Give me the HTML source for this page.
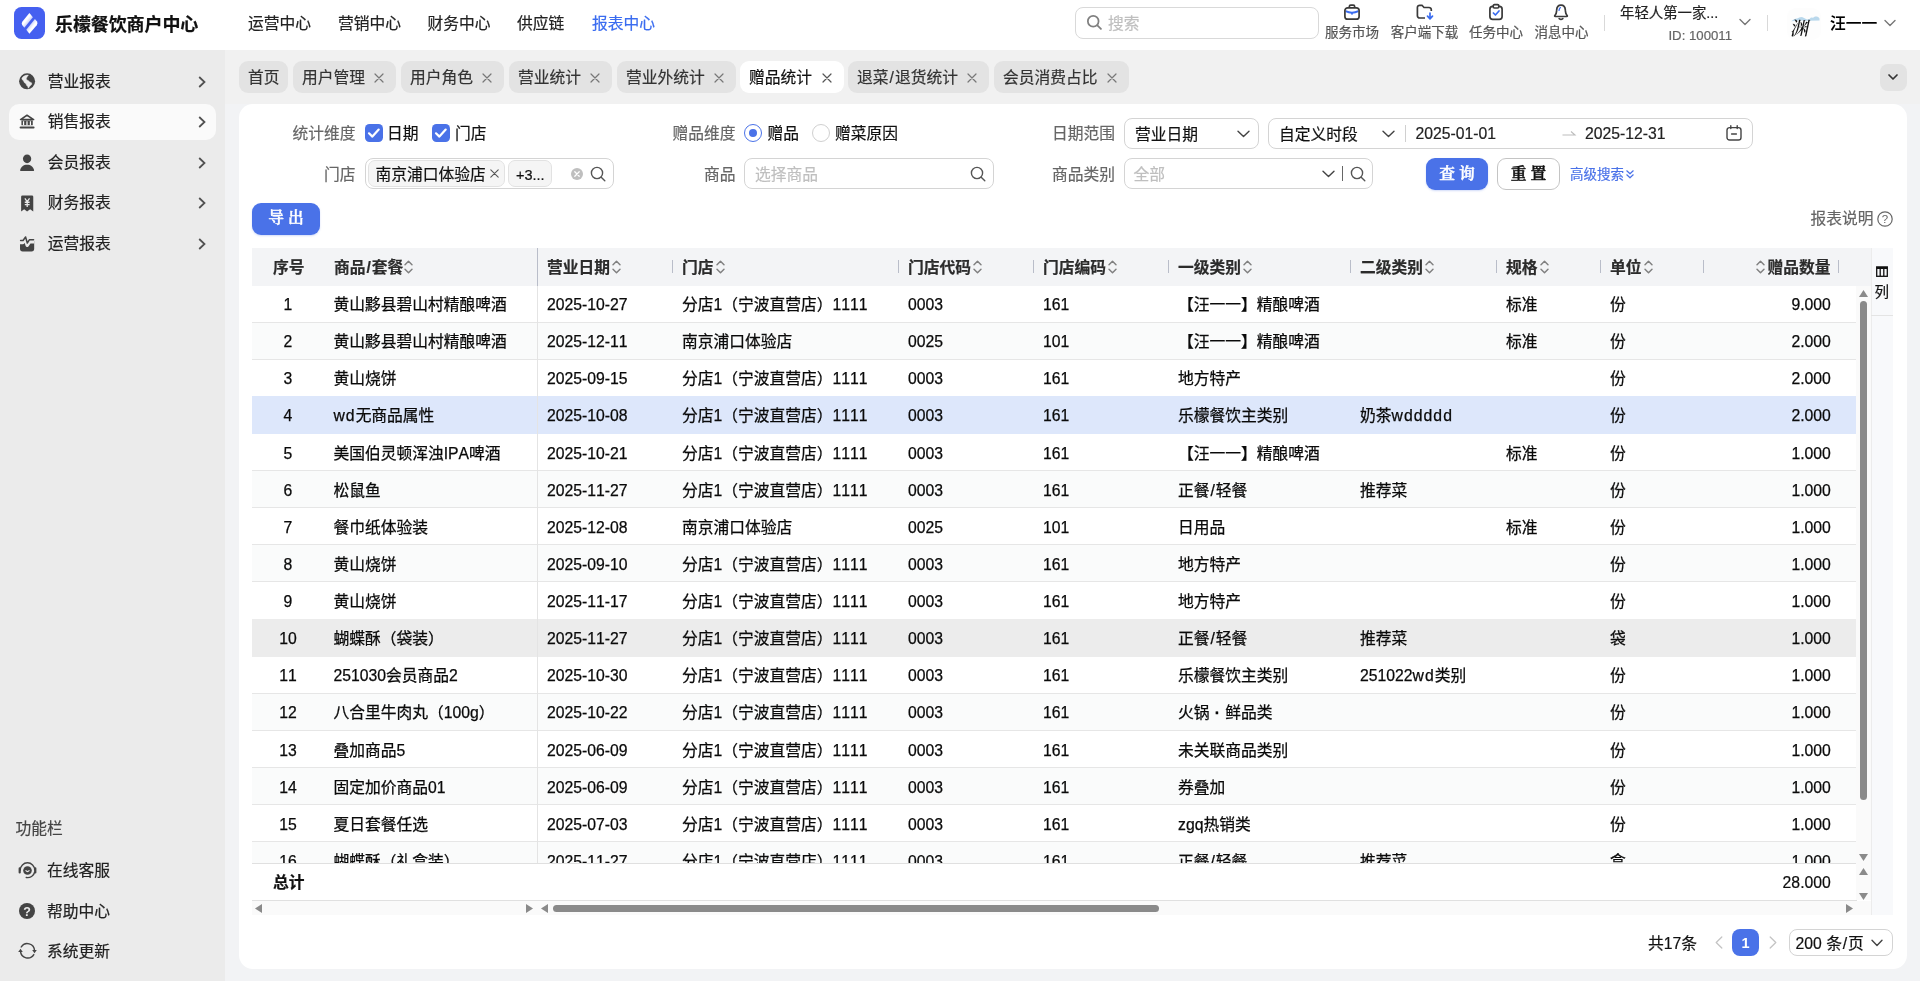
<!DOCTYPE html>
<html lang="zh-CN"><head><meta charset="utf-8"><title>乐檬餐饮商户中心</title>
<style>
*{box-sizing:border-box;margin:0;padding:0}
html,body{width:1920px;height:981px;overflow:hidden}
body{font-family:"Liberation Sans","Noto Sans CJK SC",sans-serif;font-size:15.75px;color:#1f1f1f;background:#f2f3f5;position:relative}
.a{position:absolute}
.t{position:absolute;white-space:nowrap;line-height:24px;height:24px;margin-top:1px;-webkit-text-stroke:0.2px}
#wrap{position:absolute;left:0;top:0;width:1920px;height:981px;will-change:transform}
svg{display:block;overflow:visible}
#top{left:0;top:0;width:1920px;height:50px;background:#fff}
#side{left:0;top:50px;width:225px;height:931px;background:#ebebeb}
.nav{font-size:15.75px;top:11px;color:#222}
.mi{left:9px;width:207px;height:36px;border-radius:10px}
.mi .t{left:38.8px;top:5px;color:#222}
.mi svg.ic{position:absolute;left:10.2px;top:9.8px}
.mi svg.ch{position:absolute;left:189px;top:12px}
.tab{top:61px;height:31.5px;border-radius:9px;background:#e3e3e3;color:#333}
.tab .t{left:9px;top:4px}
.tab svg{position:absolute;right:12px;top:11.5px}
#card{left:239px;top:104px;width:1668px;height:864.5px;background:#fff;border-radius:14px}
.lab{color:#666;text-align:right}
.inp{border:1px solid #d4d4d4;border-radius:8px;background:#fff}
.ph{color:#bfbfbf}
.btn{border-radius:9px;font-family:"Liberation Serif","Noto Serif CJK SC",serif;font-weight:600;-webkit-text-stroke:0.4px currentColor;text-align:center;font-size:15.75px}
.hd{font-weight:700;color:#2b2b2b;top:255px}
.sep{width:1px;height:13px;top:260px;background:#b9bdc9}
.row{left:252px;width:1604px;height:37.1px;border-bottom:1px solid #e6e6e6;overflow:hidden}
.row .t{top:6px;color:#0a0a0a;-webkit-text-stroke:0.25px;font-kerning:none}
.ls{letter-spacing:1.05px}.sl{padding:0 .9px;font-style:normal}
.c0{left:0;width:72px;text-align:center}
.c1{left:81.4px}.c2{left:294.9px}.c3{left:429.9px}.c4{left:655.9px}.c5{left:791px}.c6{left:926px}.c7{left:1108px}.c8{left:1254px}.c9{left:1358px}
.c10{right:25.2px;text-align:right}
</style></head><body><div id="wrap">
<div id="top" class="a">
<div class="a" style="left:14px;top:6.7px;width:31px;height:32.4px;border-radius:7.5px;background:#4560f0"><svg width="31" height="32.4" viewBox="0 0 31 32.4"><defs><linearGradient id="lg1" x1="0.2" y1="0.2" x2="0.75" y2="0.75"><stop offset="0.45" stop-color="#fff"/><stop offset="1" stop-color="#fff" stop-opacity="0.55"/></linearGradient><linearGradient id="lg2" x1="0.8" y1="0.8" x2="0.25" y2="0.25"><stop offset="0.45" stop-color="#fff"/><stop offset="1" stop-color="#fff" stop-opacity="0.55"/></linearGradient></defs><path d="M15.4 6.1 L8.5 14.4 Q7 16.3 8.2 18.1 L10.3 20.7 L18.9 10.2 Z" fill="url(#lg1)"/><path d="M15.4 26.7 L22.7 18.3 Q24.2 16.4 23 14.6 L20.9 12 L12.3 22.7 Z" fill="url(#lg2)"/></svg></div>
<div class="t" style="left:55px;top:11.6px;font-size:18px;font-weight:700;color:#111;letter-spacing:-0.1px">乐檬餐饮商户中心</div>
<div class="t nav" style="left:248px;color:#222">运营中心</div>
<div class="t nav" style="left:338px;color:#222">营销中心</div>
<div class="t nav" style="left:427.5px;color:#222">财务中心</div>
<div class="t nav" style="left:517px;color:#222">供应链</div>
<div class="t nav" style="left:592px;color:#3a6cf0">报表中心</div>
<div class="a inp" style="left:1075px;top:7px;width:244px;height:32px;border-color:#d9d9d9"><svg class="a" style="left:9.5px;top:6.3px" width="16.5" height="16.5" viewBox="0 0 16 16" fill="none" stroke="#808080" stroke-width="1.7"><circle cx="7" cy="7" r="5.2"/><path d="M11 11 L14.5 14.5" stroke-linecap="round"/></svg><div class="t ph" style="left:32px;top:3px">搜索</div></div>
<div class="t" style="left:1307px;top:20px;width:90px;text-align:center;font-size:13.5px;color:#555">服务市场</div>
<div class="t" style="left:1379.5px;top:20px;width:90px;text-align:center;font-size:13.5px;color:#555">客户端下载</div>
<div class="t" style="left:1451px;top:20px;width:90px;text-align:center;font-size:13.5px;color:#555">任务中心</div>
<div class="t" style="left:1516.5px;top:20px;width:90px;text-align:center;font-size:13.5px;color:#555">消息中心</div>
<svg class="a" style="left:1343px;top:3px" width="18" height="18" viewBox="0 0 18 18" fill="none" stroke="#3a3a3a" stroke-width="1.7"><path d="M2.6 8.2 Q9 11.2 15.4 8.2 M9 10 V11.4" stroke="#3a6cf0" stroke-width="2"/><rect x="1.9" y="4.8" width="14.2" height="11.4" rx="2.8"/><path d="M6.3 4.8 V3.7 a1.5 1.5 0 0 1 1.5 -1.5 h2.4 a1.5 1.5 0 0 1 1.5 1.5 V4.8"/></svg>
<svg class="a" style="left:1415px;top:3px" width="20" height="18" viewBox="0 0 20 18" fill="none" stroke="#3a3a3a" stroke-width="1.7"><path d="M10 15 H4.7 a2.3 2.3 0 0 1 -2.3 -2.3 V4.6 a2.3 2.3 0 0 1 2.3 -2.3 H7 l2 2.2 h5 a2.3 2.3 0 0 1 2.3 2.3 V8"/><path d="M15 10 v5.5 M12.5 13.2 L15 15.8 L17.5 13.2" stroke="#3a6cf0" stroke-linecap="round" stroke-linejoin="round"/></svg>
<svg class="a" style="left:1487px;top:3px" width="18" height="18" viewBox="0 0 18 18" fill="none" stroke="#3a3a3a" stroke-width="1.7"><rect x="2.9" y="3.4" width="12.2" height="13" rx="2.8"/><rect x="6.2" y="1.7" width="5.6" height="3.3" rx="1.2" fill="#fff"/><path d="M6.4 10 L8.4 12 L12 8" stroke="#3a6cf0" stroke-linecap="round" stroke-linejoin="round"/></svg>
<svg class="a" style="left:1552px;top:3px" width="18" height="18" viewBox="0 0 18 18" fill="none" stroke="#3a3a3a" stroke-width="1.7"><path d="M3 12.4 C4.6 11.2 4.4 9.4 4.6 7.4 C4.8 4.2 6.7 2.2 9 2.2 C11.3 2.2 13.2 4.2 13.4 7.4 C13.6 9.4 13.4 11.2 15 12.4 Q15.8 13.4 14.6 13.5 H3.4 Q2.2 13.4 3 12.4 Z" stroke-linejoin="round"/><path d="M7.2 15.6 Q9 17 10.8 15.6" stroke-linecap="round"/><path d="M8.4 4.6 Q7.2 5.6 7 7.4" stroke="#3a6cf0" stroke-width="1.3" stroke-linecap="round"/></svg>
<div class="a" style="left:1604px;top:15px;width:1px;height:16px;background:#d9d9d9"></div>
<div class="t" style="left:1620px;top:0px;font-size:14.4px;color:#222">年轻人第一家...</div>
<div class="t" style="left:1632px;width:100px;text-align:right;top:23px;font-size:13.2px;color:#666">ID: 100011</div>
<svg class="a" style="left:1739px;top:18px" width="12" height="8" viewBox="0 0 12 8" fill="none" stroke="#777" stroke-width="1.4" stroke-linecap="round" stroke-linejoin="round"><path d="M1 1.5 L6 6.5 L11 1.5"/></svg>
<div class="a" style="left:1767px;top:15px;width:1px;height:16px;background:#d9d9d9"></div>
<div class="a" style="left:1787px;top:8px;width:34px;height:32px;border-radius:9px;background:#fdfdfd;overflow:hidden"><svg class="a" style="left:4px;top:7.8px" width="29" height="6" viewBox="0 0 29 6"><path d="M0 5.2 L3.5 3 L6 2.6 L9 1.2 L11 1 L13 2 L16 3.4 L18.5 3 L20 1.6 L22 1.8 L24 0.4 L26 0.4 L27.5 1.2 L28.5 2.5 L28.5 4.6 L18 4.8 L9 4.6 Z" fill="#b9d8ec"/></svg><div class="t" style="left:3.5px;top:8px;font-family:'Liberation Serif','Noto Serif CJK SC',serif;font-weight:500;-webkit-text-stroke:0;font-size:18.5px;color:#111;transform:skewX(-12deg)">渊</div></div>
<div class="t" style="left:1830px;top:10.5px;font-weight:500;-webkit-text-stroke:0.1px;color:#000">汪一一</div>
<svg class="a" style="left:1884px;top:19px" width="12" height="8" viewBox="0 0 12 8" fill="none" stroke="#777" stroke-width="1.4" stroke-linecap="round" stroke-linejoin="round"><path d="M1 1.5 L6 6.5 L11 1.5"/></svg>
</div>
<div id="side" class="a">
<div class="a mi" style="top:13.5px;"><svg class="ic" style="left:10px;top:9.6px" width="16.2" height="16.6" viewBox="0 0 16 16"><circle cx="8" cy="8" r="7.9" fill="#444"/><path d="M2.8 5.2 C3.6 3.4 6 1.8 9.2 1.9 L8 3.6 L7.2 5.2 L7.6 6.6 L9 7.2 L10.6 8.6 L12.6 9.6 L12.4 11.2 L10.6 13 L9.2 14.8 L8.6 13 L7.4 12 L7 10.4 L5.4 9.4 L4.6 7.6 L3.4 6.6 Z" fill="#ebebeb" stroke="#ebebeb" stroke-width="0.5" stroke-linejoin="round"/></svg><div class="t">营业报表</div><svg class="ch" width="8" height="12" viewBox="0 0 8 12" fill="none" stroke="#505050" stroke-width="1.75" stroke-linejoin="miter"><path d="M1.2 1 L6.5 6 L1.2 11"/></svg></div>
<div class="a mi" style="top:54.0px;background:#fafafa;"><svg class="ic" width="16.2" height="16.8" preserveAspectRatio="none" viewBox="0 0 16 16"><path d="M1.5 5.3 L7.9 1.2 L14.5 5.3 Z" fill="none" stroke="#444" stroke-width="1.5" stroke-linejoin="round"/><path d="M2.4 6.1 H13.6 V10.7 H2.4 Z" fill="#444"/><path d="M4.5 6.9 V10.7 M7.9 6.9 V10.7 M11.3 6.9 V10.7" stroke="#fafafa" stroke-width="1.2"/><path d="M1.6 12.8 H14.4" stroke="#444" stroke-width="2" stroke-linecap="round"/></svg><div class="t">销售报表</div><svg class="ch" width="8" height="12" viewBox="0 0 8 12" fill="none" stroke="#505050" stroke-width="1.75" stroke-linejoin="miter"><path d="M1.2 1 L6.5 6 L1.2 11"/></svg></div>
<div class="a mi" style="top:94.5px;"><svg class="ic" width="16.2" height="16.8" preserveAspectRatio="none" viewBox="0 0 16 16" fill="#444"><circle cx="8" cy="4.6" r="4.1"/><path d="M1.6 16.2 Q1 16.2 1.1 15.5 C1.8 12.2 4.4 10.3 8 10.3 C11.6 10.3 14.2 12.2 14.9 15.5 Q15 16.2 14.4 16.2 Z"/></svg><div class="t">会员报表</div><svg class="ch" width="8" height="12" viewBox="0 0 8 12" fill="none" stroke="#505050" stroke-width="1.75" stroke-linejoin="miter"><path d="M1.2 1 L6.5 6 L1.2 11"/></svg></div>
<div class="a mi" style="top:135.0px;"><svg class="ic" width="16.2" height="16.8" preserveAspectRatio="none" viewBox="0 0 16 16"><path d="M3.4 0.4 H12.8 Q14.1 0.4 14.1 1.7 V15.8 L11 13.5 L8 15.8 L5.1 13.5 L2.1 15.8 V1.7 Q2.1 0.4 3.4 0.4 Z" fill="#444"/><path d="M5.8 3.3 L8.1 6.4 L10.4 3.3 M5.7 6.9 H10.5 M5.7 9.1 H10.5 M8.1 6.4 V11.4" stroke="#ebebeb" stroke-width="1.25" fill="none"/></svg><div class="t">财务报表</div><svg class="ch" width="8" height="12" viewBox="0 0 8 12" fill="none" stroke="#505050" stroke-width="1.75" stroke-linejoin="miter"><path d="M1.2 1 L6.5 6 L1.2 11"/></svg></div>
<div class="a mi" style="top:175.5px;"><svg class="ic" width="16.2" height="16.8" preserveAspectRatio="none" viewBox="0 0 16 16"><path d="M1 5.6 H15 V13 Q15 15.6 12.4 15.6 H3.6 Q1 15.6 1 13 Z" fill="#444"/><path d="M1 6.9 H3.8 L6.3 3.6 L8.2 9.6 L10.3 6.4 H15" stroke="#ebebeb" stroke-width="3.6" fill="none" stroke-linejoin="round"/><path d="M1.6 5.2 H4 L6.5 1.9 L8.2 7.6 L10.2 4.6 H14.4" stroke="#444" stroke-width="1.5" fill="none" stroke-linejoin="round" stroke-linecap="round"/></svg><div class="t">运营报表</div><svg class="ch" width="8" height="12" viewBox="0 0 8 12" fill="none" stroke="#505050" stroke-width="1.75" stroke-linejoin="miter"><path d="M1.2 1 L6.5 6 L1.2 11"/></svg></div>
<div class="t" style="left:15.6px;top:766px;color:#444">功能栏</div>
<div class="a" style="left:0;top:811.0px;width:225px;height:18px"><svg class="a" style="left:17.6px;top:-0.2px" width="19" height="19" viewBox="0 0 19 19" fill="none" stroke="#444" stroke-width="1.4" stroke-linecap="round"><path d="M2.3 9 A7.2 7.2 0 0 1 16.7 9"/><path d="M16.7 11 A7.2 7.2 0 0 1 8.2 16.5"/><path d="M1.7 7.4 V11.4 M17.3 7.4 V11.4" stroke-width="2.2"/><circle cx="9.5" cy="9.5" r="4.3" fill="#444" stroke="none"/><path d="M7.9 9.7 Q9.5 11.6 11.1 9.7" stroke="#ebebeb" stroke-width="1.1"/></svg><div class="t" style="left:47px;top:-3px;color:#222">在线客服</div></div>
<div class="a" style="left:0;top:851.5px;width:225px;height:18px"><svg class="a" style="left:18px;top:0.5px" width="18" height="18" viewBox="0 0 18 18"><circle cx="9" cy="9" r="8" fill="#444"/><text x="9" y="13.6" font-size="12.5" font-weight="700" text-anchor="middle" fill="#ebebeb" font-family='"Liberation Sans",sans-serif'>?</text></svg><div class="t" style="left:47px;top:-3px;color:#222">帮助中心</div></div>
<div class="a" style="left:0;top:892.0px;width:225px;height:18px"><svg class="a" style="left:17.8px;top:0.3px" width="19" height="19" viewBox="0 0 19 19" fill="none" stroke="#444" stroke-width="1.4" stroke-linecap="round"><path d="M3.2 5 A7.2 7.2 0 0 1 16.5 8.6"/><path d="M15.8 12.6 A7.2 7.2 0 0 1 2.5 9.4"/><path d="M14.2 8 H18.8 L16.5 11.2 Z" fill="#444" stroke="none"/><path d="M0.2 10 H4.8 L2.5 6.8 Z" fill="#444" stroke="none"/></svg><div class="t" style="left:47px;top:-3px;color:#222">系统更新</div></div>
</div>
<div class="a" style="left:225px;top:50px;width:1695px;height:54px;background:#f1f1f1"></div>
<div class="a tab" style="left:239px;width:49px;"><div class="t">首页</div></div>
<div class="a tab" style="left:293px;width:102.75px;"><div class="t">用户管理</div><svg width="10" height="10" viewBox="0 0 10 10" stroke="#777" stroke-width="1.2" stroke-linecap="round"><path d="M1 1 L9 9 M9 1 L1 9"/></svg></div>
<div class="a tab" style="left:401px;width:102.75px;"><div class="t">用户角色</div><svg width="10" height="10" viewBox="0 0 10 10" stroke="#777" stroke-width="1.2" stroke-linecap="round"><path d="M1 1 L9 9 M9 1 L1 9"/></svg></div>
<div class="a tab" style="left:509px;width:102.75px;"><div class="t">营业统计</div><svg width="10" height="10" viewBox="0 0 10 10" stroke="#777" stroke-width="1.2" stroke-linecap="round"><path d="M1 1 L9 9 M9 1 L1 9"/></svg></div>
<div class="a tab" style="left:617px;width:118.75px;"><div class="t">营业外统计</div><svg width="10" height="10" viewBox="0 0 10 10" stroke="#777" stroke-width="1.2" stroke-linecap="round"><path d="M1 1 L9 9 M9 1 L1 9"/></svg></div>
<div class="a tab" style="left:740px;width:104px;background:#fff;color:#111;"><div class="t">赠品统计</div><svg width="10" height="10" viewBox="0 0 10 10" stroke="#555" stroke-width="1.2" stroke-linecap="round"><path d="M1 1 L9 9 M9 1 L1 9"/></svg></div>
<div class="a tab" style="left:848px;width:141px;"><div class="t">退菜<span style="padding:0 1px">/</span>退货统计</div><svg width="10" height="10" viewBox="0 0 10 10" stroke="#777" stroke-width="1.2" stroke-linecap="round"><path d="M1 1 L9 9 M9 1 L1 9"/></svg></div>
<div class="a tab" style="left:994px;width:135px;"><div class="t">会员消费占比</div><svg width="10" height="10" viewBox="0 0 10 10" stroke="#777" stroke-width="1.2" stroke-linecap="round"><path d="M1 1 L9 9 M9 1 L1 9"/></svg></div>
<div class="a" style="left:1880px;top:63.8px;width:27px;height:27.2px;border-radius:8px;background:#e3e3e3"><svg class="a" style="left:8.3px;top:10.2px" width="10" height="7" viewBox="0 0 10 7" fill="none" stroke="#333" stroke-width="1.7" stroke-linecap="round" stroke-linejoin="round"><path d="M1 1 L5 5 L9 1"/></svg></div>
<div id="card" class="a"></div>
<div class="t lab" style="left:235.5px;width:120px;top:121px">统计维度</div>
<div class="t lab" style="left:235.5px;width:120px;top:162px">门店</div>
<div class="t lab" style="left:615.5px;width:120px;top:121px">赠品维度</div>
<div class="t lab" style="left:615.5px;width:120px;top:162px">商品</div>
<div class="t lab" style="left:995px;width:120px;top:121px">日期范围</div>
<div class="t lab" style="left:995px;width:120px;top:162px">商品类别</div>
<div class="a" style="left:365px;top:124px;width:18px;height:18px;border-radius:4.5px;background:#4a72e8"><svg width="18" height="18" viewBox="0 0 18 18" fill="none" stroke="#fff" stroke-width="2.2" stroke-linecap="round" stroke-linejoin="round"><path d="M4 9.3 L7.4 12.6 L13.7 5.6"/></svg></div>
<div class="t" style="left:387px;top:121px;color:#111">日期</div>
<div class="a" style="left:432px;top:124px;width:18px;height:18px;border-radius:4.5px;background:#4a72e8"><svg width="18" height="18" viewBox="0 0 18 18" fill="none" stroke="#fff" stroke-width="2.2" stroke-linecap="round" stroke-linejoin="round"><path d="M4 9.3 L7.4 12.6 L13.7 5.6"/></svg></div>
<div class="t" style="left:455px;top:121px;color:#111">门店</div>
<div class="a" style="left:744px;top:124px;width:18px;height:18px;border-radius:9px;border:1.2px solid #4a72e8;background:#fff"><div class="a" style="left:3.8px;top:3.8px;width:8px;height:8px;border-radius:4px;background:#4a72e8"></div></div>
<div class="t" style="left:767.5px;top:121px;color:#111">赠品</div>
<div class="a" style="left:812px;top:124px;width:18px;height:18px;border-radius:9px;border:1px solid #d0d0d0;background:#fff"></div>
<div class="t" style="left:835px;top:121px;color:#111">赠菜原因</div>
<div class="a inp" style="left:1124px;top:118px;width:135px;height:31px"></div>
<div class="t" style="left:1135px;top:122px;color:#111">营业日期</div>
<svg class="a" style="left:1236.5px;top:130px" width="13" height="8" viewBox="0 0 13 8" fill="none" stroke="#444" stroke-width="1.4" stroke-linecap="round" stroke-linejoin="round"><path d="M1 1.2 L6.5 6.6 L12 1.2"/></svg>
<div class="a inp" style="left:1268px;top:118px;width:485px;height:31px"></div>
<div class="t" style="left:1279px;top:122px;color:#111">自定义时段</div>
<svg class="a" style="left:1381.5px;top:130px" width="13" height="8" viewBox="0 0 13 8" fill="none" stroke="#444" stroke-width="1.4" stroke-linecap="round" stroke-linejoin="round"><path d="M1 1.2 L6.5 6.6 L12 1.2"/></svg>
<div class="a" style="left:1404.5px;top:125px;width:1px;height:17px;background:#d0d0d0"></div>
<div class="t" style="left:1415.5px;top:121px;color:#222">2025-01-01</div>
<svg class="a" style="left:1562px;top:129px" width="14" height="8" viewBox="0 0 14 8" fill="none" stroke="#bdbdbd" stroke-width="1.1"><path d="M0.5 6 H13 L9 2.5"/></svg>
<div class="t" style="left:1585px;top:121px;color:#222">2025-12-31</div>
<svg class="a" style="left:1726px;top:125px" width="16" height="16" viewBox="0 0 16 16" fill="none" stroke="#444" stroke-width="1.4" stroke-linecap="round"><rect x="1" y="2.6" width="14" height="12.4" rx="2.6"/><path d="M4.8 0.8 V3.6 M11.2 0.8 V3.6 M5.6 9 H10.4"/></svg>
<div class="a inp" style="left:365px;top:158px;width:248.5px;height:31px"></div>
<div class="a" style="left:368px;top:160px;width:137px;height:27px;border-radius:7px;background:#f5f5f5;border:1px solid #e2e2e2"></div>
<div class="t" style="left:375.5px;top:161.5px;color:#111">南京浦口体验店</div>
<svg class="a" style="left:490px;top:169px" width="9" height="9" viewBox="0 0 9 9" stroke="#555" stroke-width="1.1" stroke-linecap="round"><path d="M0.8 0.8 L8.2 8.2 M8.2 0.8 L0.8 8.2"/></svg>
<div class="a" style="left:507.5px;top:160px;width:44px;height:27px;border-radius:7px;background:#f5f5f5;border:1px solid #e2e2e2"></div>
<div class="t" style="left:516px;top:162px;color:#111;font-size:14.5px">+3...</div>
<svg class="a" style="left:570.5px;top:168px" width="12" height="12" viewBox="0 0 12 12"><circle cx="6" cy="6" r="6" fill="#bfbfbf"/><path d="M3.8 3.8 L8.2 8.2 M8.2 3.8 L3.8 8.2" stroke="#fff" stroke-width="1.3" stroke-linecap="round"/></svg>
<svg class="a" style="left:590px;top:166px" width="16" height="16" viewBox="0 0 16 16" fill="none" stroke="#555" stroke-width="1.4"><circle cx="7" cy="7" r="5.6"/><path d="M11.2 11.2 L14.8 14.8" stroke-linecap="round"/></svg>
<div class="a inp" style="left:744px;top:158px;width:249.5px;height:31px"></div>
<div class="t ph" style="left:755px;top:162px">选择商品</div>
<svg class="a" style="left:970px;top:166px" width="16" height="16" viewBox="0 0 16 16" fill="none" stroke="#555" stroke-width="1.4"><circle cx="7" cy="7" r="5.6"/><path d="M11.2 11.2 L14.8 14.8" stroke-linecap="round"/></svg>
<div class="a inp" style="left:1124px;top:158px;width:249px;height:31px"></div>
<div class="t ph" style="left:1133.5px;top:162px">全部</div>
<svg class="a" style="left:1321.5px;top:170px" width="13" height="8" viewBox="0 0 13 8" fill="none" stroke="#444" stroke-width="1.4" stroke-linecap="round" stroke-linejoin="round"><path d="M1 1.2 L6.5 6.6 L12 1.2"/></svg>
<div class="a" style="left:1342px;top:166px;width:1px;height:15px;background:#666"></div>
<svg class="a" style="left:1350px;top:166px" width="16" height="16" viewBox="0 0 16 16" fill="none" stroke="#555" stroke-width="1.4"><circle cx="7" cy="7" r="5.6"/><path d="M11.2 11.2 L14.8 14.8" stroke-linecap="round"/></svg>
<div class="a btn" style="left:1426px;top:158px;width:62px;height:32px;background:#4a72e8;color:#fff;line-height:31px;box-shadow:0 1px 2px rgba(74,114,232,.25)">查 询</div>
<div class="a btn" style="left:1497px;top:158px;width:63px;height:32px;background:#fff;color:#111;border:1px solid #c4c4c4;line-height:29px">重 置</div>
<div class="t" style="left:1570px;top:161.5px;font-size:13.5px;color:#4a72e8">高级搜索</div>
<svg class="a" style="left:1625.5px;top:170px" width="8" height="9" viewBox="0 0 8 9" fill="none" stroke="#4a72e8" stroke-width="1.2" stroke-linecap="round" stroke-linejoin="round"><path d="M0.8 0.8 L4 3.8 L7.2 0.8 M0.8 4.8 L4 7.8 L7.2 4.8"/></svg>
<div class="a btn" style="left:252px;top:203px;width:68px;height:31.5px;background:#4a72e8;color:#fff;line-height:30.5px;box-shadow:0 1px 2px rgba(74,114,232,.25)">导 出</div>
<div class="t" style="left:1810.5px;top:205.5px;color:#666">报表说明</div>
<svg class="a" style="left:1877px;top:211px" width="16" height="16" viewBox="0 0 16 16" fill="none" stroke="#666" stroke-width="1.2"><circle cx="8" cy="8" r="7.2"/><text x="8" y="12" font-size="11.5" text-anchor="middle" fill="#666" stroke="none" font-family='"Liberation Sans",sans-serif'>?</text></svg>
<div class="a" style="left:252px;top:248px;width:1619px;height:38px;background:#f3f4f6"></div>
<div class="a" style="left:1871px;top:248px;width:22px;height:667px;background:#f8f9fb;border-left:1px solid #ececec"></div>
<div class="a" style="left:1871px;top:315px;width:22px;height:1px;background:#e4e4e4"></div>
<svg class="a" style="left:1876px;top:266px" width="12" height="11" viewBox="0 0 12 11" fill="none" stroke="#111" stroke-width="1.3"><rect x="0.7" y="0.9" width="10.6" height="9.4"/><path d="M0.7 2 H11.3" stroke-width="2"/><path d="M4.2 1 V10 M7.8 1 V10"/></svg>
<div class="t" style="left:1874.5px;top:279px;font-size:14.5px;color:#111">列</div>
<div class="t hd" style="left:273px">序号</div>
<div class="t hd" style="left:334px">商品<i class="sl">/</i>套餐</div>
<svg class="a" style="left:404px;top:260px" width="9" height="14" viewBox="0 0 9 14" fill="none" stroke="#808080" stroke-width="1.45" stroke-linecap="round" stroke-linejoin="round"><path d="M1 4.8 L4.5 1.2 L8 4.8 M1 9.2 L4.5 12.8 L8 9.2"/></svg>
<div class="t hd" style="left:547px">营业日期</div>
<svg class="a" style="left:612px;top:260px" width="9" height="14" viewBox="0 0 9 14" fill="none" stroke="#808080" stroke-width="1.45" stroke-linecap="round" stroke-linejoin="round"><path d="M1 4.8 L4.5 1.2 L8 4.8 M1 9.2 L4.5 12.8 L8 9.2"/></svg>
<div class="t hd" style="left:682px">门店</div>
<svg class="a" style="left:715.5px;top:260px" width="9" height="14" viewBox="0 0 9 14" fill="none" stroke="#808080" stroke-width="1.45" stroke-linecap="round" stroke-linejoin="round"><path d="M1 4.8 L4.5 1.2 L8 4.8 M1 9.2 L4.5 12.8 L8 9.2"/></svg>
<div class="t hd" style="left:908px">门店代码</div>
<svg class="a" style="left:973px;top:260px" width="9" height="14" viewBox="0 0 9 14" fill="none" stroke="#808080" stroke-width="1.45" stroke-linecap="round" stroke-linejoin="round"><path d="M1 4.8 L4.5 1.2 L8 4.8 M1 9.2 L4.5 12.8 L8 9.2"/></svg>
<div class="t hd" style="left:1043px">门店编码</div>
<svg class="a" style="left:1108px;top:260px" width="9" height="14" viewBox="0 0 9 14" fill="none" stroke="#808080" stroke-width="1.45" stroke-linecap="round" stroke-linejoin="round"><path d="M1 4.8 L4.5 1.2 L8 4.8 M1 9.2 L4.5 12.8 L8 9.2"/></svg>
<div class="t hd" style="left:1178px">一级类别</div>
<svg class="a" style="left:1243px;top:260px" width="9" height="14" viewBox="0 0 9 14" fill="none" stroke="#808080" stroke-width="1.45" stroke-linecap="round" stroke-linejoin="round"><path d="M1 4.8 L4.5 1.2 L8 4.8 M1 9.2 L4.5 12.8 L8 9.2"/></svg>
<div class="t hd" style="left:1360px">二级类别</div>
<svg class="a" style="left:1425px;top:260px" width="9" height="14" viewBox="0 0 9 14" fill="none" stroke="#808080" stroke-width="1.45" stroke-linecap="round" stroke-linejoin="round"><path d="M1 4.8 L4.5 1.2 L8 4.8 M1 9.2 L4.5 12.8 L8 9.2"/></svg>
<div class="t hd" style="left:1506px">规格</div>
<svg class="a" style="left:1539.5px;top:260px" width="9" height="14" viewBox="0 0 9 14" fill="none" stroke="#808080" stroke-width="1.45" stroke-linecap="round" stroke-linejoin="round"><path d="M1 4.8 L4.5 1.2 L8 4.8 M1 9.2 L4.5 12.8 L8 9.2"/></svg>
<div class="t hd" style="left:1610px">单位</div>
<svg class="a" style="left:1643.5px;top:260px" width="9" height="14" viewBox="0 0 9 14" fill="none" stroke="#808080" stroke-width="1.45" stroke-linecap="round" stroke-linejoin="round"><path d="M1 4.8 L4.5 1.2 L8 4.8 M1 9.2 L4.5 12.8 L8 9.2"/></svg>
<svg class="a" style="left:1756px;top:260px" width="9" height="14" viewBox="0 0 9 14" fill="none" stroke="#808080" stroke-width="1.45" stroke-linecap="round" stroke-linejoin="round"><path d="M1 4.8 L4.5 1.2 L8 4.8 M1 9.2 L4.5 12.8 L8 9.2"/></svg>
<div class="t hd" style="left:1710px;width:120.5px;text-align:right">赠品数量</div>
<div class="a sep" style="left:672px"></div>
<div class="a sep" style="left:898px"></div>
<div class="a sep" style="left:1033px"></div>
<div class="a sep" style="left:1168px"></div>
<div class="a sep" style="left:1350px"></div>
<div class="a sep" style="left:1496px"></div>
<div class="a sep" style="left:1600px"></div>
<div class="a sep" style="left:1703px"></div>
<div class="a sep" style="left:1838px"></div>
<div class="a" style="left:252px;top:286px;width:1604px;height:577px;overflow:hidden">
<div class="a row" style="left:0;top:-0.3px;background:#fff"><div class="a" style="left:0;top:0.3px;width:1604px;height:37px"><div class="t c0">1</div><div class="t c1">黄山黟县碧山村精酿啤酒</div><div class="t c2">2025-10-27</div><div class="t c3">分店1（宁波直营店）1111</div><div class="t c4">0003</div><div class="t c5">161</div><div class="t c6">【汪一一】精酿啤酒</div><div class="t c8">标准</div><div class="t c9">份</div><div class="t c10">9.000</div></div></div>
<div class="a row" style="left:0;top:36.8px;background:#fafbfb"><div class="a" style="left:0;top:0.2px;width:1604px;height:37px"><div class="t c0">2</div><div class="t c1">黄山黟县碧山村精酿啤酒</div><div class="t c2">2025-12-11</div><div class="t c3">南京浦口体验店</div><div class="t c4">0025</div><div class="t c5">101</div><div class="t c6">【汪一一】精酿啤酒</div><div class="t c8">标准</div><div class="t c9">份</div><div class="t c10">2.000</div></div></div>
<div class="a row" style="left:0;top:73.9px;background:#fff;border-color:#dde7fb"><div class="a" style="left:0;top:0.1px;width:1604px;height:37px"><div class="t c0">3</div><div class="t c1">黄山烧饼</div><div class="t c2">2025-09-15</div><div class="t c3">分店1（宁波直营店）1111</div><div class="t c4">0003</div><div class="t c5">161</div><div class="t c6">地方特产</div><div class="t c9">份</div><div class="t c10">2.000</div></div></div>
<div class="a row" style="left:0;top:111.0px;background:#dde7fb;border-color:#dde7fb"><div class="a" style="left:0;top:0.0px;width:1604px;height:37px"><div class="t c0">4</div><div class="t c1"><span class="ls">wd</span>无商品属性</div><div class="t c2">2025-10-08</div><div class="t c3">分店1（宁波直营店）1111</div><div class="t c4">0003</div><div class="t c5">161</div><div class="t c6">乐檬餐饮主类别</div><div class="t c7">奶茶<span class="ls">wddddd</span></div><div class="t c9">份</div><div class="t c10">2.000</div></div></div>
<div class="a row" style="left:0;top:148.1px;background:#fff"><div class="a" style="left:0;top:0.9px;width:1604px;height:37px"><div class="t c0">5</div><div class="t c1">美国伯灵顿浑浊IPA啤酒</div><div class="t c2">2025-10-21</div><div class="t c3">分店1（宁波直营店）1111</div><div class="t c4">0003</div><div class="t c5">161</div><div class="t c6">【汪一一】精酿啤酒</div><div class="t c8">标准</div><div class="t c9">份</div><div class="t c10">1.000</div></div></div>
<div class="a row" style="left:0;top:185.2px;background:#fafbfb"><div class="a" style="left:0;top:0.8px;width:1604px;height:37px"><div class="t c0">6</div><div class="t c1">松鼠鱼</div><div class="t c2">2025-11-27</div><div class="t c3">分店1（宁波直营店）1111</div><div class="t c4">0003</div><div class="t c5">161</div><div class="t c6">正餐<i class="sl">/</i>轻餐</div><div class="t c7">推荐菜</div><div class="t c9">份</div><div class="t c10">1.000</div></div></div>
<div class="a row" style="left:0;top:222.3px;background:#fff"><div class="a" style="left:0;top:0.7px;width:1604px;height:37px"><div class="t c0">7</div><div class="t c1">餐巾纸体验装</div><div class="t c2">2025-12-08</div><div class="t c3">南京浦口体验店</div><div class="t c4">0025</div><div class="t c5">101</div><div class="t c6">日用品</div><div class="t c8">标准</div><div class="t c9">份</div><div class="t c10">1.000</div></div></div>
<div class="a row" style="left:0;top:259.4px;background:#fafbfb"><div class="a" style="left:0;top:0.6px;width:1604px;height:37px"><div class="t c0">8</div><div class="t c1">黄山烧饼</div><div class="t c2">2025-09-10</div><div class="t c3">分店1（宁波直营店）1111</div><div class="t c4">0003</div><div class="t c5">161</div><div class="t c6">地方特产</div><div class="t c9">份</div><div class="t c10">1.000</div></div></div>
<div class="a row" style="left:0;top:296.5px;background:#fff;border-color:#ececec"><div class="a" style="left:0;top:0.5px;width:1604px;height:37px"><div class="t c0">9</div><div class="t c1">黄山烧饼</div><div class="t c2">2025-11-17</div><div class="t c3">分店1（宁波直营店）1111</div><div class="t c4">0003</div><div class="t c5">161</div><div class="t c6">地方特产</div><div class="t c9">份</div><div class="t c10">1.000</div></div></div>
<div class="a row" style="left:0;top:333.6px;background:#ececec;border-color:#ececec"><div class="a" style="left:0;top:0.4px;width:1604px;height:37px"><div class="t c0">10</div><div class="t c1">蝴蝶酥（袋装）</div><div class="t c2">2025-11-27</div><div class="t c3">分店1（宁波直营店）1111</div><div class="t c4">0003</div><div class="t c5">161</div><div class="t c6">正餐<i class="sl">/</i>轻餐</div><div class="t c7">推荐菜</div><div class="t c9">袋</div><div class="t c10">1.000</div></div></div>
<div class="a row" style="left:0;top:370.7px;background:#fff"><div class="a" style="left:0;top:0.3px;width:1604px;height:37px"><div class="t c0">11</div><div class="t c1">251030会员商品2</div><div class="t c2">2025-10-30</div><div class="t c3">分店1（宁波直营店）1111</div><div class="t c4">0003</div><div class="t c5">161</div><div class="t c6">乐檬餐饮主类别</div><div class="t c7">251022<span class="ls">wd</span>类别</div><div class="t c9">份</div><div class="t c10">1.000</div></div></div>
<div class="a row" style="left:0;top:407.8px;background:#fafbfb"><div class="a" style="left:0;top:0.2px;width:1604px;height:37px"><div class="t c0">12</div><div class="t c1">八合里牛肉丸（100g）</div><div class="t c2">2025-10-22</div><div class="t c3">分店1（宁波直营店）1111</div><div class="t c4">0003</div><div class="t c5">161</div><div class="t c6">火锅<span style="display:inline-block;width:15.75px;text-align:center;font-weight:700">·</span>鲜品类</div><div class="t c9">份</div><div class="t c10">1.000</div></div></div>
<div class="a row" style="left:0;top:444.9px;background:#fff"><div class="a" style="left:0;top:1.1px;width:1604px;height:37px"><div class="t c0">13</div><div class="t c1">叠加商品5</div><div class="t c2">2025-06-09</div><div class="t c3">分店1（宁波直营店）1111</div><div class="t c4">0003</div><div class="t c5">161</div><div class="t c6">未关联商品类别</div><div class="t c9">份</div><div class="t c10">1.000</div></div></div>
<div class="a row" style="left:0;top:482.0px;background:#fafbfb"><div class="a" style="left:0;top:1.0px;width:1604px;height:37px"><div class="t c0">14</div><div class="t c1">固定加价商品01</div><div class="t c2">2025-06-09</div><div class="t c3">分店1（宁波直营店）1111</div><div class="t c4">0003</div><div class="t c5">161</div><div class="t c6">券叠加</div><div class="t c9">份</div><div class="t c10">1.000</div></div></div>
<div class="a row" style="left:0;top:519.1px;background:#fff"><div class="a" style="left:0;top:0.9px;width:1604px;height:37px"><div class="t c0">15</div><div class="t c1">夏日套餐任选</div><div class="t c2">2025-07-03</div><div class="t c3">分店1（宁波直营店）1111</div><div class="t c4">0003</div><div class="t c5">161</div><div class="t c6">zgq热销类</div><div class="t c9">份</div><div class="t c10">1.000</div></div></div>
<div class="a row" style="left:0;top:556.2px;background:#fafbfb"><div class="a" style="left:0;top:0.8px;width:1604px;height:37px"><div class="t c0">16</div><div class="t c1">蝴蝶酥（礼盒装）</div><div class="t c2">2025-11-27</div><div class="t c3">分店1（宁波直营店）1111</div><div class="t c4">0003</div><div class="t c5">161</div><div class="t c6">正餐<i class="sl">/</i>轻餐</div><div class="t c7">推荐菜</div><div class="t c9">盒</div><div class="t c10">1.000</div></div></div>
</div>
<div class="a" style="left:537px;top:248px;width:1px;height:38px;background:#b9bdc9"></div>
<div class="a" style="left:537px;top:286px;width:1px;height:629px;background:#e4e4e4"></div>
<div class="a" style="left:252px;top:863px;width:1604.5px;height:37.5px;background:#fff;border-top:1px solid #e0e0e0;border-bottom:1px solid #e0e0e0"></div>
<div class="t" style="left:273px;top:870px;font-weight:700;color:#111">总计</div>
<div class="t" style="left:1710px;width:120.8px;text-align:right;top:870px;color:#0d0d0d">28.000</div>
<div class="a" style="left:252px;top:900.5px;width:1619px;height:14.5px;background:#fafafa"></div>
<div class="a" style="left:1856px;top:286px;width:15px;height:614px;background:#fafafa"></div>
<svg class="a" style="left:255px;top:904px" width="7" height="9" viewBox="0 0 7 9"><path d="M0 4.5 L7 0 V9 Z" fill="#8a8a8a"/></svg>
<svg class="a" style="left:526px;top:904px" width="7" height="9" viewBox="0 0 7 9"><path d="M7 4.5 L0 0 V9 Z" fill="#8a8a8a"/></svg>
<svg class="a" style="left:541px;top:904px" width="7" height="9" viewBox="0 0 7 9"><path d="M0 4.5 L7 0 V9 Z" fill="#8a8a8a"/></svg>
<svg class="a" style="left:1846px;top:904px" width="7" height="9" viewBox="0 0 7 9"><path d="M7 4.5 L0 0 V9 Z" fill="#8a8a8a"/></svg>
<div class="a" style="left:553px;top:904.5px;width:606px;height:7px;border-radius:3.5px;background:#8a8a8a"></div>
<svg class="a" style="left:1859px;top:290px" width="9" height="7" viewBox="0 0 9 7"><path d="M4.5 0 L9 7 H0 Z" fill="#8a8a8a"/></svg>
<svg class="a" style="left:1859px;top:854px" width="9" height="7" viewBox="0 0 9 7"><path d="M4.5 7 L9 0 H0 Z" fill="#8a8a8a"/></svg>
<svg class="a" style="left:1859px;top:867.5px" width="9" height="7" viewBox="0 0 9 7"><path d="M4.5 0 L9 7 H0 Z" fill="#8a8a8a"/></svg>
<svg class="a" style="left:1859px;top:893px" width="9" height="7" viewBox="0 0 9 7"><path d="M4.5 7 L9 0 H0 Z" fill="#8a8a8a"/></svg>
<div class="a" style="left:1860px;top:301px;width:7px;height:499px;border-radius:3.5px;background:#8a8a8a"></div>
<div class="t" style="left:1648px;top:931px;color:#111">共17条</div>
<svg class="a" style="left:1715px;top:936px" width="8" height="13" viewBox="0 0 8 13" fill="none" stroke="#c4c4c4" stroke-width="1.3" stroke-linecap="round" stroke-linejoin="round"><path d="M6.8 1 L1.2 6.5 L6.8 12"/></svg>
<div class="a" style="left:1732px;top:929px;width:27px;height:27px;border-radius:8px;background:#4a72e8;color:#fff;text-align:center;line-height:29.5px;font-weight:700;font-size:14.5px">1</div>
<svg class="a" style="left:1769px;top:936px" width="8" height="13" viewBox="0 0 8 13" fill="none" stroke="#c4c4c4" stroke-width="1.3" stroke-linecap="round" stroke-linejoin="round"><path d="M1.2 1 L6.8 6.5 L1.2 12"/></svg>
<div class="a inp" style="left:1789px;top:929px;width:104px;height:27px;border-radius:8px"></div>
<div class="t" style="left:1795.5px;top:930.5px;color:#111">200 条<i class="sl">/</i>页</div>
<svg class="a" style="left:1871px;top:938.5px" width="12" height="8" viewBox="0 0 12 8" fill="none" stroke="#444" stroke-width="1.4" stroke-linecap="round" stroke-linejoin="round"><path d="M1 1.2 L6 6.4 L11 1.2"/></svg>
</div></body></html>
